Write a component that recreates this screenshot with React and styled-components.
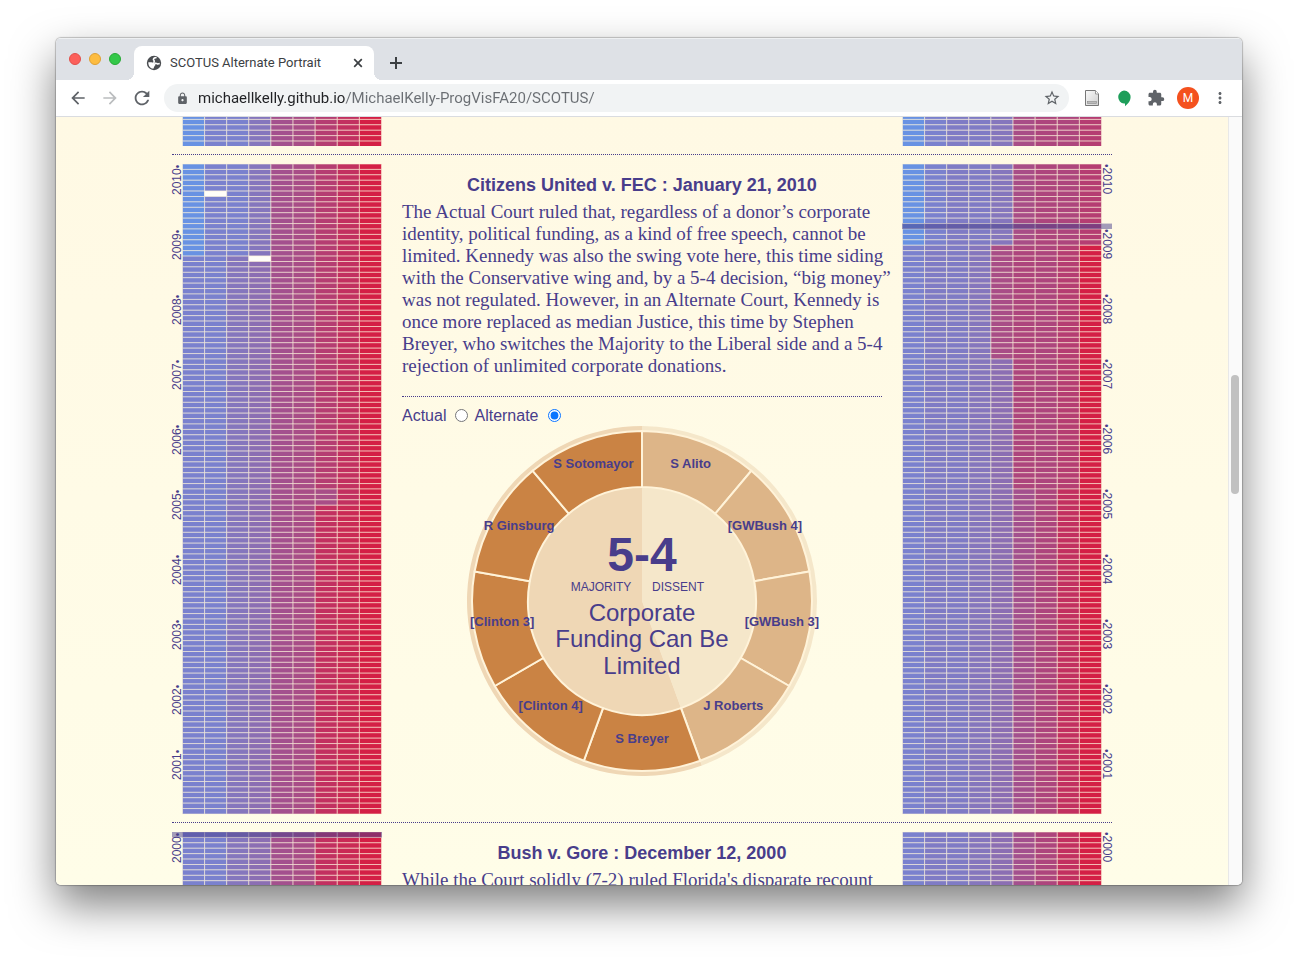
import React, { useState } from "react";
import styled, { createGlobalStyle } from "styled-components";
import {
  MdArrowBack,
  MdArrowForward,
  MdRefresh,
  MdLock,
  MdStarBorder,
  MdExtension,
  MdMoreVert,
} from "react-icons/md";

const INK = "#483d8b";

const GlobalStyle = createGlobalStyle`
  *, *::before, *::after { box-sizing: border-box; }
  body {
    margin: 0;
    background: #fff;
    font-family: "Liberation Sans", Arial, sans-serif;
  }
`;

const Desktop = styled.div`
  display: flex;
  height: 100vh;
  padding: 38px 56px 74px;
`;

const Window = styled.div`
  flex: 1;
  min-width: 0;
  display: flex;
  flex-direction: column;
  overflow: hidden;
  border-radius: 5px;
  background: #fff;
  box-shadow: 0 0 1px 1px rgba(0, 0, 0, 0.22), 0 20px 44px rgba(0, 0, 0, 0.5);
`;

/* ---------- browser chrome ---------- */

const TabStrip = styled.header`
  display: flex;
  align-items: flex-end;
  height: 42px;
  flex: none;
  padding-left: 13px;
  background: #dee1e6;
  box-shadow: inset 0 1px 0 #eef0f2;
`;

const Lights = styled.div`
  display: flex;
  gap: 8px;
  height: 42px;
  align-items: center;
  margin-right: 13px;
`;

const Light = styled.button`
  width: 12px;
  height: 12px;
  padding: 0;
  border: 1px solid ${(p) => p.$edge};
  border-radius: 50%;
  background: ${(p) => p.$fill};
`;

const Tab = styled.div`
  position: relative;
  display: flex;
  align-items: center;
  width: 240px;
  height: 34px;
  padding: 0 8px 0 12px;
  border-radius: 8px 8px 0 0;
  background: #fff;
  color: #3c4043;
  font: 13px/16px Roboto, sans-serif;

  &::before,
  &::after {
    content: "";
    position: absolute;
    bottom: 0;
    width: 8px;
    height: 8px;
  }
  &::before {
    left: -8px;
    background: radial-gradient(circle at 0 0, transparent 8px, #fff 8px);
  }
  &::after {
    right: -8px;
    background: radial-gradient(circle at 100% 0, transparent 8px, #fff 8px);
  }
`;

const TabTitle = styled.span`
  flex: 1;
  margin-left: 8px;
  white-space: nowrap;
`;

const IconButton = styled.button`
  display: grid;
  place-items: center;
  flex: none;
  width: ${(p) => p.$w || 32}px;
  height: ${(p) => p.$h || 28}px;
  padding: 0;
  border: 0;
  background: none;
  color: ${(p) => p.$color || "#5f6368"};
`;

const Toolbar = styled.nav`
  display: flex;
  align-items: center;
  flex: none;
  height: 37px;
  padding: 0 6px;
  border-bottom: 1px solid #dadce0;
  background: #fff;
`;

const Omnibox = styled.div`
  flex: 1;
  display: flex;
  align-items: center;
  gap: 9px;
  height: 28px;
  margin: 0 7px 0 6px;
  padding: 0 1px 0 12px;
  border-radius: 14px;
  background: #f1f3f4;
  color: #5f6368;
`;

const Address = styled.input`
  flex: 1;
  min-width: 0;
  padding: 0;
  border: 0;
  outline: 0;
  font: 15px/20px Roboto, sans-serif;
  background: linear-gradient(90deg, #202124 148px, #6a6e73 148px);
  -webkit-background-clip: text;
  background-clip: text;
  -webkit-text-fill-color: transparent;
`;

const Avatar = styled.span`
  display: grid;
  place-items: center;
  width: 22px;
  height: 22px;
  border-radius: 50%;
  background: #f4511e;
  color: #fff;
  font: 12px/22px Roboto, sans-serif;
`;

const CloseIcon = () => (
  <svg width="10" height="10" viewBox="0 0 10 10">
    <path d="M1.2 1.2l7.6 7.6M8.800 1.200l-7.600 7.600" stroke="currentColor" strokeWidth="1.700" />
  </svg>
);

const PlusIcon = () => (
  <svg width="12" height="12" viewBox="0 0 12 12">
    <path d="M6 0v12M0 6h12" stroke="currentColor" strokeWidth="2" />
  </svg>
);

const GlobeIcon = () => (
  <svg width="16" height="16" viewBox="0 0 16 16">
    <circle cx="8" cy="8" r="7.2" fill="#4a4d51" />
    <path
      d="M10.600 2.400c-1.600.1-3.200.9-3.200 2 0 .8.9.9.9 1.700 0 .7-.9.9-.3 1.600.8.8 2.200.1 3 .9.5.5 1.300.4 2.700-.1"
      fill="none"
      stroke="#fff"
      strokeWidth="1.500"
    />
    <path
      d="M2.300 7.300h3.200c1.600 0 2.200 1.100 3.300 1.500.9.300 1 1.300.2 1.800-.8.500-.6 1.200-1.100 1.900l-.6 1.300C4.300 13.600 2.200 11 2.300 7.300z"
      fill="#fff"
    />
  </svg>
);

const DocIcon = () => (
  <svg width="16" height="18" viewBox="0 0 16 18">
    <defs>
      <linearGradient id="paper" x1="0" y1="0" x2="1" y2="1">
        <stop offset="0" stopColor="#fafafa" />
        <stop offset="1" stopColor="#cfcfcf" />
      </linearGradient>
    </defs>
    <path d="M1.500 1.500h10L14.500 5v11.500h-13z" fill="url(#paper)" stroke="#777" />
    <path d="M11.500 1.500V5h3" fill="#fff" stroke="#999" />
    <rect x="3.500" y="12.500" width="9" height="2" fill="#bbb" stroke="#8a8a8a" strokeWidth=".6" />
  </svg>
);

const BubbleIcon = () => (
  <svg width="14" height="17" viewBox="0 0 14 17">
    <path
      d="M7 .5a6.600 6.600 0 0 1 6.600 6.600c0 3.600-2.600 7-5.600 9.200v-2.700H7A6.600 6.600 0 0 1 7 .5z"
      fill="#1e9e5a"
    />
  </svg>
);

/* ---------- page ---------- */

const Body = styled.div`
  flex: 1;
  min-height: 0;
  display: flex;
`;

const Page = styled.main`
  flex: 1;
  min-width: 0;
  overflow: hidden;
  background: linear-gradient(#fff9e4, #fffde8);
  color: ${INK};
`;

const ScrollTrack = styled.div`
  flex: none;
  width: 14px;
  padding: 258px 3px 0 2px;
  border-left: 1px solid #e8e8e8;
  background: #fafafa;
`;

const ScrollThumb = styled.div`
  height: 119px;
  border-radius: 4px;
  background: #c1c1c1;
`;

const Section = styled.section`
  display: grid;
  grid-template-columns: 210px minmax(0, 1fr) 210px;
  align-items: start;
  max-width: 940px;
  margin: 0 auto;
  padding: ${(p) => (p.$first ? 0 : 9)}px 0 8px;
  border-bottom: 1px dotted ${INK};
`;

const Story = styled.article`
  padding: 10px 20px 0;
`;

const CaseTitle = styled.h2`
  margin: 0 0 5px;
  font-size: 18px;
  line-height: 22px;
  text-align: center;
`;

const Summary = styled.p`
  margin: 0;
  padding-bottom: 19px;
  font: 19px/22px "Liberation Serif", "Times New Roman", serif;
  white-space: nowrap;
`;

const Choices = styled.form`
  display: flex;
  align-items: center;
  height: 30px;
  padding-top: 8px;
  border-top: 1px dotted ${INK};
  font-size: 16px;
  line-height: 22px;
`;

const Choice = styled.label`
  display: flex;
  align-items: center;
  gap: 9px;
  margin-right: 6px;
`;

const Radio = styled.input`
  width: 13px;
  height: 13px;
  margin: 0;
  accent-color: #0a75ff;
`;

const WheelSvg = styled.svg`
  display: block;
  margin: 0 auto;
  overflow: visible;
  fill: ${INK};
  text-anchor: middle;
  font-family: "Liberation Sans", Arial, sans-serif;
`;

const ChartSvg = styled.svg`
  display: block;
  overflow: ${(p) => (p.$clip ? "hidden" : "visible")};
  fill: ${INK};
  font: 12px "Liberation Sans", Arial, sans-serif;
`;

/* ---------- timeline charts ---------- */

const COL = 199 / 9;
const ROW = 65 / 12;

const SKY = "#6892e3";
const P1 = "#7a81ce";
const P2 = "#7f7bc5";
const P3 = "#8576bd";
const P4 = "#8b6eb3";
const M1 = "#a3508e";
const M2 = "#a84d87";
const M3 = "#ad457d";
const R1 = "#b53d72";
const R2 = "#c23060";
const R3 = "#ca2a55";
const R4 = "#d41f45";

const LEFT_BANDS = [
  [17, [SKY, P1, P1, P3, M1, M2, R1, R2, R4]],
  [60, [P1, P1, P3, P4, M1, M2, R1, R2, R4]],
  [63, [P1, P1, P3, P4, M1, M2, M2, R2, R4]],
  [140, [P1, P1, P3, P4, M1, M2, R2, R3, R4]],
];
const RIGHT_BANDS = [
  [15, [SKY, P1, P2, P2, P3, M2, M3, M3, R1]],
  [36, [P1, P2, P2, P3, M2, M3, M3, R1, R4]],
  [60, [P1, P2, P2, P3, P4, M3, M3, R1, R4]],
  [140, [P1, P2, P2, P3, P4, M1, M3, R2, R4]],
];

function Timeline({ side, bands, from, height, offset = 0, gaps = [], years = [], ruling }) {
  const left = side === "left";
  const x0 = left ? 10.5 : 0.5;
  const rows = Math.ceil((height + offset) / ROW - 0.01);
  const cells = [];
  for (let r = 0; r < rows; r++) {
    const colors = bands.find(([end]) => from + r < end)[1];
    colors.forEach((c, i) => {
      const open = gaps.some(([gr, gc]) => gr === r && gc === i);
      cells.push(
        <rect
          key={`${r}-${i}`}
          x={x0 + i * COL}
          y={r * ROW}
          width={COL}
          height={ROW}
          fill={open ? "#fffef8" : c}
        />
      );
    });
  }
  return (
    <ChartSvg $clip={offset > 0} width="210" height={height} viewBox={`0 ${offset} 210 ${height}`}>
      <g stroke="#fff5dc" strokeOpacity="0.55">
        {cells}
      </g>
      {ruling !== undefined && (
        <rect x="0" y={ruling * ROW} width="210" height={ROW} fillOpacity="0.5" />
      )}
      {years.map((y, i) =>
        left ? (
          <text key={y} transform={`translate(9 ${i * 65 + 31}) rotate(-90)`}>
            {y}
            <tspan fontSize="10">•</tspan>
          </text>
        ) : (
          <text key={y} transform={`translate(201 ${i * 65}) rotate(90)`}>
            <tspan fontSize="10">•</tspan>
            {y}
          </text>
        )
      )}
    </ChartSvg>
  );
}

/* ---------- vote wheel ---------- */

const ALTERNATE = [
  ["S Alito", false],
  ["[GWBush 4]", false],
  ["[GWBush 3]", false],
  ["J Roberts", false],
  ["S Breyer", true],
  ["[Clinton 4]", true],
  ["[Clinton 3]", true],
  ["R Ginsburg", true],
  ["S Sotomayor", true],
];

const point = (deg, r) => {
  const a = (deg * Math.PI) / 180;
  return [175 + r * Math.sin(a), 175 - r * Math.cos(a)];
};

const wedge = (a, b, r0, r1) => {
  const big = b - a > 180 ? 1 : 0;
  return `M${point(a, r1)}A${r1} ${r1} 0 ${big} 1 ${point(b, r1)}L${point(b, r0)}A${r0} ${r0} 0 ${big} 0 ${point(a, r0)}Z`;
};

function VoteWheel() {
  return (
    <WheelSvg width="350" height="350" viewBox="0 0 350 350">
      <path d={wedge(0, 160, 0, 175)} fill="#f5e7ca" />
      <path d={wedge(160, 360, 0, 175)} fill="#efd7b5" />
      {ALTERNATE.map(([name, majority], i) => (
        <path
          key={name}
          d={wedge(i * 40, i * 40 + 40, 114, 170)}
          fill={majority ? "#ca8344" : "#ddb588"}
          stroke="#fff3d9"
          strokeWidth="2"
        />
      ))}
      {ALTERNATE.map(([name], i) => {
        const [x, y] = point(i * 40 + 20, 142);
        return (
          <text key={name} x={x} y={y} fontSize="13" fontWeight="700">
            {name}
          </text>
        );
      })}
      <text x="175" y="145" fontSize="48" fontWeight="700">5-4</text>
      <text x="134" y="165" fontSize="12">MAJORITY</text>
      <text x="211" y="165" fontSize="12">DISSENT</text>
      <g fontSize="24">
        <text x="175" y="195">Corporate</text>
        <text x="175" y="221">Funding Can Be</text>
        <text x="175" y="248">Limited</text>
      </g>
    </WheelSvg>
  );
}

const DECADE = [2010, 2009, 2008, 2007, 2006, 2005, 2004, 2003, 2002, 2001];

const CITIZENS = [
  "The Actual Court ruled that, regardless of a donor’s corporate",
  "identity, political funding, as a kind of free speech, cannot be",
  "limited. Kennedy was also the swing vote here, this time siding",
  "with the Conservative wing and, by a 5-4 decision, “big money”",
  "was not regulated. However, in an Alternate Court, Kennedy is",
  "once more replaced as median Justice, this time by Stephen",
  "Breyer, who switches the Majority to the Liberal side and a 5-4",
  "rejection of unlimited corporate donations.",
];

export default function App() {
  const [court, setCourt] = useState("alternate");
  return (
    <>
      <GlobalStyle />
      <Desktop>
        <Window>
          <TabStrip>
            <Lights>
              <Light aria-label="Close window" $fill="#fc605b" $edge="#e2504b" />
              <Light aria-label="Minimize window" $fill="#fdbc40" $edge="#dfa033" />
              <Light aria-label="Zoom window" $fill="#34c84a" $edge="#27aa35" />
            </Lights>
            <Tab>
              <GlobeIcon />
              <TabTitle>SCOTUS Alternate Portrait</TabTitle>
              <IconButton aria-label="Close tab" $w={16} $h={16} $color="#3c4043">
                <CloseIcon />
              </IconButton>
            </Tab>
            <IconButton aria-label="New tab" $w={44} $h={34} $color="#3c4043">
              <PlusIcon />
            </IconButton>
          </TabStrip>

          <Toolbar>
            <IconButton aria-label="Back"><MdArrowBack size={20} /></IconButton>
            <IconButton aria-label="Forward" $color="#bbbdbf"><MdArrowForward size={20} /></IconButton>
            <IconButton aria-label="Reload"><MdRefresh size={22} /></IconButton>
            <Omnibox>
              <MdLock size={13} />
              <Address
                aria-label="Address"
                defaultValue="michaellkelly.github.io/MichaelKelly-ProgVisFA20/SCOTUS/"
              />
              <IconButton aria-label="Bookmark this page"><MdStarBorder size={18} /></IconButton>
            </Omnibox>
            <IconButton aria-label="Reader"><DocIcon /></IconButton>
            <IconButton aria-label="Chat"><BubbleIcon /></IconButton>
            <IconButton aria-label="Extensions"><MdExtension size={18} /></IconButton>
            <IconButton aria-label="Profile"><Avatar>M</Avatar></IconButton>
            <IconButton aria-label="More"><MdMoreVert size={18} /></IconButton>
          </Toolbar>

          <Body>
            <Page>
              <Section $first>
                <Timeline side="left" bands={LEFT_BANDS} from={0} height={29} offset={3} />
                <div />
                <Timeline side="right" bands={RIGHT_BANDS} from={0} height={29} offset={3} />
              </Section>

              <Section>
                <Timeline
                  side="left"
                  bands={LEFT_BANDS}
                  from={0}
                  height={650}
                  gaps={[[5, 1], [17, 3]]}
                  years={DECADE}
                />
                <Story>
                  <CaseTitle>Citizens United v. FEC : January 21, 2010</CaseTitle>
                  <Summary>
                    {CITIZENS.map((line) => (
                      <React.Fragment key={line}>
                        {line}
                        <br />
                      </React.Fragment>
                    ))}
                  </Summary>
                  <Choices>
                    <Choice>
                      Actual
                      <Radio
                        type="radio"
                        name="court"
                        checked={court === "actual"}
                        onChange={() => setCourt("actual")}
                      />
                    </Choice>
                    <Choice>
                      Alternate
                      <Radio
                        type="radio"
                        name="court"
                        checked={court === "alternate"}
                        onChange={() => setCourt("alternate")}
                      />
                    </Choice>
                  </Choices>
                  <VoteWheel />
                </Story>
                <Timeline
                  side="right"
                  bands={RIGHT_BANDS}
                  from={0}
                  height={650}
                  years={DECADE}
                  ruling={11}
                />
              </Section>

              <Section>
                <Timeline side="left" bands={LEFT_BANDS} from={120} height={65} years={[2000]} ruling={0} />
                <Story>
                  <CaseTitle>Bush v. Gore : December 12, 2000</CaseTitle>
                  <Summary>While the Court solidly (7-2) ruled Florida's disparate recount</Summary>
                </Story>
                <Timeline side="right" bands={RIGHT_BANDS} from={120} height={65} years={[2000]} />
              </Section>
            </Page>
            <ScrollTrack>
              <ScrollThumb />
            </ScrollTrack>
          </Body>
        </Window>
      </Desktop>
    </>
  );
}
